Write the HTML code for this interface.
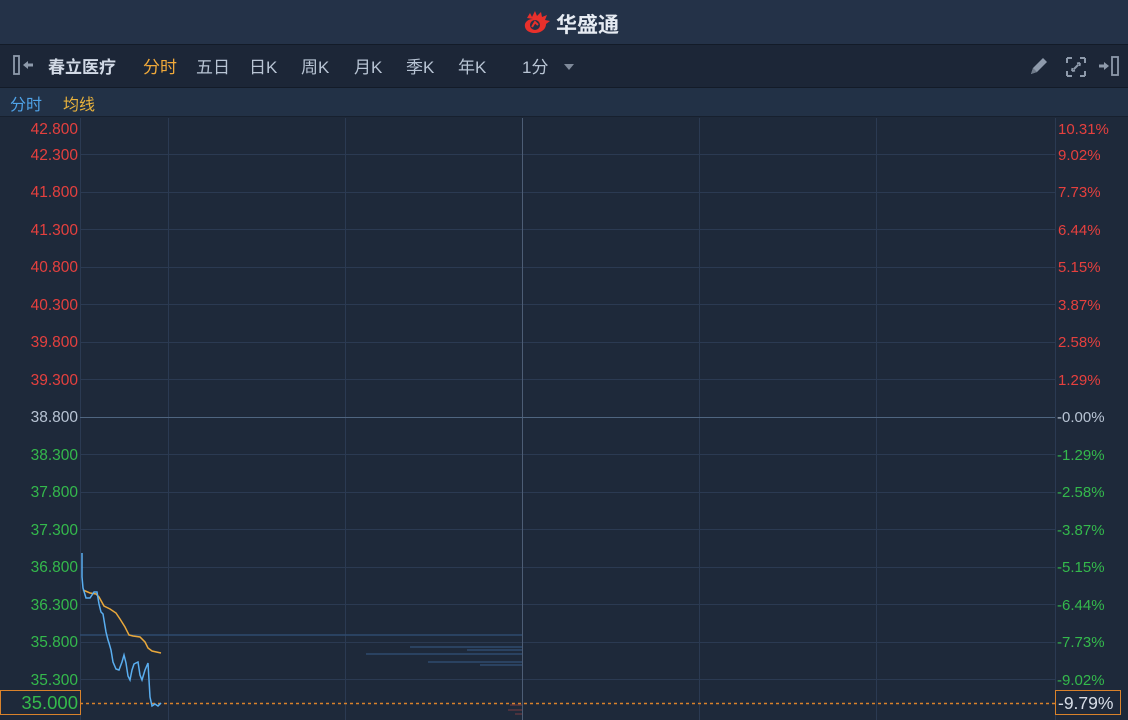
<!DOCTYPE html>
<html><head><meta charset="utf-8"><style>
*{margin:0;padding:0;box-sizing:border-box}
body{width:1128px;height:720px;overflow:hidden;background:#1e293a;font-family:"Liberation Sans","Noto Sans CJK SC",sans-serif;position:relative}
.hdr{position:absolute;left:0;top:0;width:1128px;height:45px;background:#243248;border-bottom:1px solid #131b28}
.tb{position:absolute;left:0;top:45px;width:1128px;height:43px;background:#1c2637;border-bottom:1px solid #131b28}
.sb{position:absolute;left:0;top:88px;width:1128px;height:29px;background:#223146;border-bottom:1px solid #17202e}
.t{position:absolute;font-size:17px;color:#b8c4d4;top:8px;white-space:nowrap}
</style></head><body>
<div class="hdr">
<svg style="position:absolute;left:523px;top:10px" width="30" height="24" viewBox="0 0 30 24"><path d="M4 8 L7 3 L9 7 L12 1 L14 6 L18 2 L19 7 L24 5 L22 10 L27 11 L23 14 C23 20 17 23 12 23 C5 23 1 19 2 14 C3 11 6 9 10 9" fill="#e8302b"/><circle cx="12" cy="15" r="5" fill="#243248"/><path d="M9 17 L12 12 L15 15" stroke="#e8302b" stroke-width="2" fill="none"/></svg>
<div style="position:absolute;left:556px;top:9px;font-size:21px;font-weight:bold;color:#e6ebf2">华盛通</div>
</div>
<div class="tb">
<svg style="position:absolute;left:12px;top:10px" width="24" height="20"><rect x="2" y="1" width="5" height="18" fill="none" stroke="#8e9aab" stroke-width="1.8"/><path d="M11 10 L16 6 L16 14Z M15 8.5 H21 V11.5 H15Z" fill="#8e9aab"/></svg>
<div class="t" style="left:48px;color:#d2dae6;font-weight:bold">春立医疗</div>
<div class="t" style="left:143px;color:#f0a93a">分时</div>
<div class="t" style="left:196px">五日</div>
<div class="t" style="left:249px">日K</div>
<div class="t" style="left:301px">周K</div>
<div class="t" style="left:354px">月K</div>
<div class="t" style="left:406px">季K</div>
<div class="t" style="left:458px">年K</div>
<div class="t" style="left:522px">1分</div>
<svg style="position:absolute;left:564px;top:19px" width="10" height="7"><path d="M0 0H10L5 6Z" fill="#7f8a9a"/></svg>
<svg style="position:absolute;left:1028px;top:10px" width="22" height="22"><path d="M3 19 L5 13 L15 3 L19 7 L9 17Z" fill="#8e9aab"/><path d="M3 19 L5 13 L9 17Z" fill="#6f7a8a"/></svg>
<svg style="position:absolute;left:1066px;top:12px" width="20" height="20"><path d="M1 1h5M1 1v5M19 1h-5M19 1v5M1 19h5M1 19v-5M19 19h-5M19 19v-5" stroke="#8e9aab" stroke-width="2"/><path d="M8 12L12 8M6 14l3-0.5M6 14l0.5-3M14 6l-3 0.5M14 6l-0.5 3" stroke="#8e9aab" stroke-width="2"/></svg>
<svg style="position:absolute;left:1098px;top:11px" width="26" height="20"><path d="M1 8.5H7V11.5H1Z M6 6 L11 10 L6 14Z" fill="#8e9aab"/><rect x="14" y="1" width="6" height="18" fill="none" stroke="#8e9aab" stroke-width="1.8"/></svg>
</div>
<div class="sb">
<div style="position:absolute;left:10px;top:3px;font-size:16px;color:#4fa3e8">分时</div>
<div style="position:absolute;left:63px;top:3px;font-size:16px;color:#e9b23c">均线</div>
</div>
<svg style="position:absolute;left:0;top:0" width="1128" height="720" font-family="Liberation Sans, sans-serif" font-size="15.5">
<g stroke="#2b3a52" stroke-width="1">
<line x1="80.5" y1="118" x2="80.5" y2="720"/><line x1="168.5" y1="118" x2="168.5" y2="720"/><line x1="345.5" y1="118" x2="345.5" y2="720"/><line x1="699.5" y1="118" x2="699.5" y2="720"/><line x1="876.5" y1="118" x2="876.5" y2="720"/><line x1="1055.5" y1="118" x2="1055.5" y2="720"/>
<line x1="80" y1="154.5" x2="1055" y2="154.5"/><line x1="80" y1="192.5" x2="1055" y2="192.5"/><line x1="80" y1="229.5" x2="1055" y2="229.5"/><line x1="80" y1="267.5" x2="1055" y2="267.5"/><line x1="80" y1="304.5" x2="1055" y2="304.5"/><line x1="80" y1="342.5" x2="1055" y2="342.5"/><line x1="80" y1="379.5" x2="1055" y2="379.5"/><line x1="80" y1="454.5" x2="1055" y2="454.5"/><line x1="80" y1="492.5" x2="1055" y2="492.5"/><line x1="80" y1="529.5" x2="1055" y2="529.5"/><line x1="80" y1="567.5" x2="1055" y2="567.5"/><line x1="80" y1="604.5" x2="1055" y2="604.5"/><line x1="80" y1="642.5" x2="1055" y2="642.5"/><line x1="80" y1="679.5" x2="1055" y2="679.5"/>
</g>
<line x1="522.5" y1="118" x2="522.5" y2="720" stroke="#4d5d75"/>
<line x1="80" y1="417.5" x2="1055" y2="417.5" stroke="#4f6580"/>
<g stroke="#2f4a6e" stroke-width="1.5">
<line x1="80" y1="635" x2="522" y2="635"/><line x1="410" y1="647" x2="522" y2="647"/><line x1="467" y1="650" x2="522" y2="650"/><line x1="366" y1="654" x2="522" y2="654"/><line x1="428" y1="662" x2="522" y2="662"/><line x1="480" y1="665" x2="522" y2="665"/>
</g>
<g stroke="#7a3a40"><line x1="510" y1="705" x2="522" y2="705"/><line x1="508" y1="710" x2="522" y2="710"/><line x1="515" y1="714" x2="522" y2="714"/></g>
<line x1="80" y1="703.5" x2="1055" y2="703.5" stroke="#d9822b" stroke-dasharray="3,3" stroke-width="1.6"/>
<polyline fill="none" stroke="#e9a83c" stroke-width="1.5" points="83,590 90,593 96,594 99,597 104,606 110,609 116,613 120,619 125,627 129,635 133,636 140,637 145,642 148,648 152,651 161,653"/>
<polyline fill="none" stroke="#5aaef0" stroke-width="1.5" points="82,553 82,577 83,588 86,598 90,598 94,592 97,592 99,604 101,612 103,614 106,632 108,640 109,643 111,650 113,662 116,669 119,670 122,662 124,655 126,663 128,676 130,680 132,670 134,664 138,662 140,675 142,680 145,670 148,663 150,697 152,706 155,704 158,706 161,703"/>
<g text-anchor="end">
<g fill="#e5403e"><text x="78" y="134">42.800</text><text x="78" y="160">42.300</text><text x="78" y="197">41.800</text><text x="78" y="235">41.300</text><text x="78" y="272">40.800</text><text x="78" y="310">40.300</text><text x="78" y="347">39.800</text><text x="78" y="385">39.300</text></g>
<text x="78" y="422" fill="#b8c4d4">38.800</text>
<g fill="#34b94c"><text x="78" y="460">38.300</text><text x="78" y="497">37.800</text><text x="78" y="535">37.300</text><text x="78" y="572">36.800</text><text x="78" y="610">36.300</text><text x="78" y="647">35.800</text><text x="78" y="685">35.300</text></g>
</g>
<g fill="#e5403e" font-size="15"><text x="1058" y="134">10.31%</text><text x="1058" y="160">9.02%</text><text x="1058" y="197">7.73%</text><text x="1058" y="235">6.44%</text><text x="1058" y="272">5.15%</text><text x="1058" y="310">3.87%</text><text x="1058" y="347">2.58%</text><text x="1058" y="385">1.29%</text></g>
<g font-size="15"><text x="1057" y="422" fill="#b8c4d4">-0.00%</text>
<g fill="#34b94c"><text x="1057" y="460">-1.29%</text><text x="1057" y="497">-2.58%</text><text x="1057" y="535">-3.87%</text><text x="1057" y="572">-5.15%</text><text x="1057" y="610">-6.44%</text><text x="1057" y="647">-7.73%</text><text x="1057" y="685">-9.02%</text></g></g>
<rect x="0.5" y="690.5" width="80" height="24" fill="#1e293a" stroke="#d9822b"/>
<text x="78" y="709" text-anchor="end" fill="#34b94c" font-size="18.5">35.000</text>
<rect x="1055.5" y="690.5" width="65" height="24" fill="#1e293a" stroke="#d9822b"/>
<text x="1058" y="709" fill="#d8dee8" font-size="17.5">-9.79%</text>
</svg>
</body></html>
